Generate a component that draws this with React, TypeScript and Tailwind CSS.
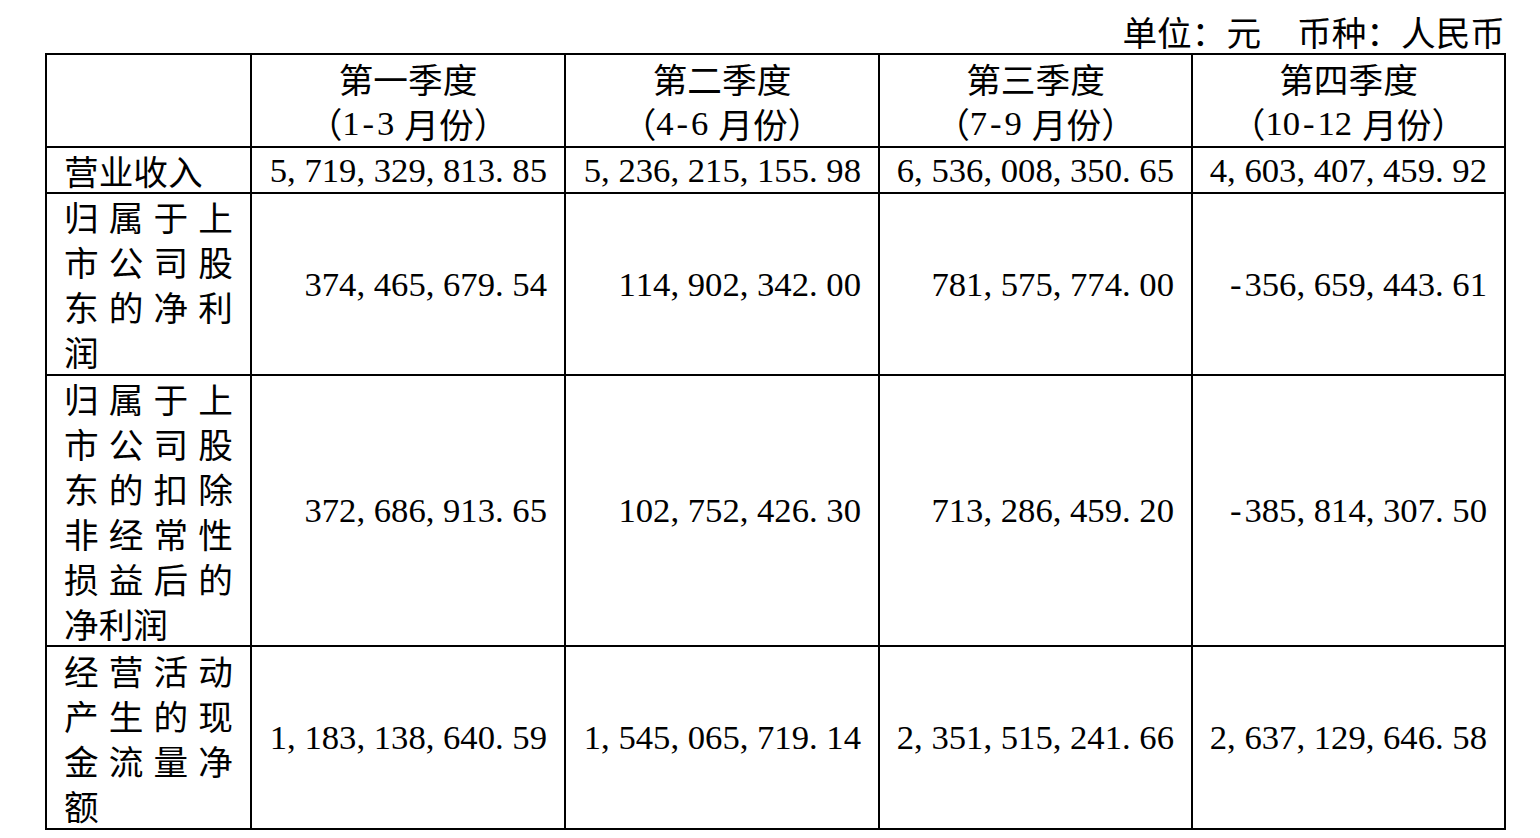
import React from 'react';

const CJK = '"Noto Sans CJK SC", "Liberation Serif", serif';

// half-width chars laid out on a 0.5em pitch, like the Song face in the source
const Half = ({ text }: { text: string }) => (
  <span style={{ fontFamily: '"Liberation Serif", serif' }}>
    {text.split('').map((c, i) => (
      <span
        key={i}
        className={
          c === ',' || c === '.'
            ? 'inline-block w-[0.5em] text-left'
            : 'inline-block w-[0.5em] text-center'
        }
      >
        {c}
      </span>
    ))}
  </span>
);

const quarters = [
  { name: '第一季度', months: '1-3' },
  { name: '第二季度', months: '4-6' },
  { name: '第三季度', months: '7-9' },
  { name: '第四季度', months: '10-12' },
];

const rows = [
  {
    label: [['营', '业', '收', '入']],
    single: true,
    values: ['5,719,329,813.85', '5,236,215,155.98', '6,536,008,350.65', '4,603,407,459.92'],
  },
  {
    label: [
      ['归', '属', '于', '上'],
      ['市', '公', '司', '股'],
      ['东', '的', '净', '利'],
      ['润'],
    ],
    values: ['374,465,679.54', '114,902,342.00', '781,575,774.00', '-356,659,443.61'],
  },
  {
    label: [
      ['归', '属', '于', '上'],
      ['市', '公', '司', '股'],
      ['东', '的', '扣', '除'],
      ['非', '经', '常', '性'],
      ['损', '益', '后', '的'],
      ['净', '利', '润'],
    ],
    values: ['372,686,913.65', '102,752,426.30', '713,286,459.20', '-385,814,307.50'],
  },
  {
    label: [
      ['经', '营', '活', '动'],
      ['产', '生', '的', '现'],
      ['金', '流', '量', '净'],
      ['额'],
    ],
    values: ['1,183,138,640.59', '1,545,065,719.14', '2,351,515,241.66', '2,637,129,646.58'],
  },
];

const Label = ({ lines, single }: { lines: string[][]; single?: boolean }) => (
  <div className="bg-white pl-[17px] pr-[17px] flex flex-col justify-center leading-[45px]">
    {lines.map((chars, i) =>
      single || i === lines.length - 1 ? (
        <div key={i}>{chars.join('')}</div>
      ) : (
        <div key={i} className="flex justify-between">
          {chars.map((c, j) => (
            <span key={j}>{c}</span>
          ))}
        </div>
      )
    )}
  </div>
);

export default function App() {
  return (
    <div className="w-[1540px] h-[838px] bg-white text-black text-[34.67px]" style={{ fontFamily: CJK }}>
      <div className="h-[53px] pt-[10px] pr-[35px] flex justify-end leading-[43px]">
        <span>单位：元</span>
        <span className="ml-[36px]">币种：人民币</span>
      </div>

      <div className="ml-[45px] w-[1461px] bg-black p-[2px] grid gap-[2px] grid-cols-[203px_312px_312px_311px_311px] grid-rows-[91px_44px_180px_269px_181px]">
        <div className="bg-white" />
        {quarters.map((q) => (
          <div key={q.name} className="bg-white flex flex-col items-center justify-center leading-[45px]">
            <div>{q.name}</div>
            <div className="flex">
              <span className="inline-block w-[1em] text-right">（</span>
              <Half text={q.months} />
              <span className="ml-[10px]">月份</span>
              <span className="inline-block w-[1em] text-left">）</span>
            </div>
          </div>
        ))}

        {rows.map((r, i) => (
          <React.Fragment key={i}>
            <Label lines={r.label} single={r.single} />
            {r.values.map((v, j) => (
              <div key={j} className="bg-white flex items-center justify-end pr-[17px] leading-[45px] overflow-hidden">
                <Half text={v} />
              </div>
            ))}
          </React.Fragment>
        ))}
      </div>
    </div>
  );
}
